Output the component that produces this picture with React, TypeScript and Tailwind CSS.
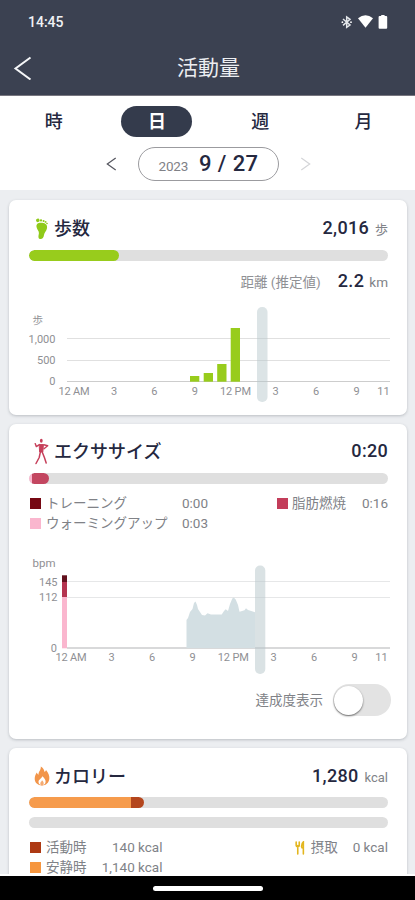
import type { ReactNode } from "react";

type Segment = { width: string; color: string };

function Progress({ segments, className = "" }: { segments: Segment[]; className?: string }) {
  return (
    <div className={`h-[11px] w-full overflow-hidden rounded-full bg-[#dfdfdf] ${className}`}>
      <div className="flex h-full w-fit overflow-hidden rounded-full">
        {segments.map((s) => (
          <div key={s.color} className={`h-full ${s.width} ${s.color}`} />
        ))}
      </div>
    </div>
  );
}

function Card({ className, children }: { className: string; children: ReactNode }) {
  return (
    <section
      className={`ml-[9px] w-[398px] shrink-0 rounded-[7px] bg-white pr-[19px] pl-5 shadow-[0_1px_3px_rgba(60,70,80,0.28)] ${className}`}
    >
      {children}
    </section>
  );
}

function CardHeader({ icon, title, value, unit }: { icon: ReactNode; title: string; value: string; unit?: string }) {
  return (
    <div className="flex h-7 items-center text-[#25283f]">
      <div className="flex h-7 w-[25px] shrink-0 items-center justify-center">{icon}</div>
      <h2 className="pt-[2px] text-[18px] leading-7 font-medium">{title}</h2>
      <div className="ml-auto flex items-baseline">
        <span className="text-[18px] leading-7 font-medium tracking-[0.3px]">{value}</span>
        {unit && <span className="ml-[6px] text-[13px] text-[#808287]">{unit}</span>}
      </div>
    </div>
  );
}

const hours = ["12 AM", "3", "6", "9", "12 PM", "3", "6", "9", "11"];

function HourLabels({ xs, y }: { xs: number[]; y: number }) {
  return (
    <g fill="#8f9094" textAnchor="middle" fontSize="11">
      {hours.map((h, i) => (
        <text key={i} x={xs[i]} y={y} textLength={h.length > 2 ? 31 : undefined}>
          {h}
        </text>
      ))}
    </g>
  );
}

function StepsChart() {
  return (
    <svg className="-ml-5 block h-[105px] w-[398px]" viewBox="9 304 398 105">
      <path d="M67 338.5H390M67 360.5H390" stroke="#e0e0e0" />
      <path d="M67 381.5H390" stroke="#cdcdcd" />
      <g fill="#8f9094" fontSize="11" textAnchor="end">
        <text x="43" y="324" fontSize="10.5">歩</text>
        <text x="55.5" y="342.5">1,000</text>
        <text x="55.5" y="364">500</text>
        <text x="55.5" y="385">0</text>
      </g>
      <g fill="#98cc1c">
        <rect x="190" y="376" width="9.3" height="5.7" />
        <rect x="203.7" y="373" width="9.3" height="8.7" />
        <rect x="217.2" y="364" width="9.3" height="17.7" />
        <rect x="230.7" y="328" width="9.3" height="53.7" />
      </g>
      <rect x="257" y="307" width="10.5" height="95" rx="5" fill="#b5c6ca" fillOpacity="0.48" />
      <HourLabels xs={[74, 114, 154.3, 194.8, 235.5, 275.7, 316, 356.5, 383.5]} y={394.5} />
    </svg>
  );
}

function HeartChart() {
  return (
    <svg className="-ml-5 block h-[120px] w-[398px]" viewBox="9 556 398 120">
      <path d="M67 581.5H390M67 597.5H390" stroke="#e6e7e8" />
      <path d="M67 648H390" stroke="#b2b3b5" />
      <g fill="#8f9094" fontSize="11" textAnchor="end">
        <text x="55.5" y="566.5" fontSize="11.5">bpm</text>
        <text x="57.5" y="585.5">145</text>
        <text x="57.5" y="601">112</text>
        <text x="57" y="651.5">0</text>
      </g>
      <rect x="62" y="575.3" width="5" height="7" fill="#62101d" />
      <rect x="62" y="582" width="5" height="15" fill="#b4334f" />
      <rect x="62" y="597" width="5" height="51.3" fill="#fab6ce" />
      <path
        d="M186.5 648V620L188 618L190 612L192.5 609L194 603L195.5 601.5L197 605L198 609L202 615L205 615.5L207.5 613.3L211 614.5H221.7L224 611L225.7 609.2L228 611L230 604L232.3 598.5L233.8 597.4L235.7 599.5L238 605L239.5 611.7L244.5 610.2L246 608.3L248 610L252 611.3L255 612.3V648Z"
        fill="#d3dfe3"
      />
      <rect x="255" y="565.5" width="10.3" height="108.5" rx="5" fill="#b5c6ca" fillOpacity="0.5" />
      <HourLabels xs={[71, 111.5, 152, 192.5, 233.3, 273.5, 314, 354.5, 381.5]} y={661} />
    </svg>
  );
}

function Swatch({ color }: { color: string }) {
  return <span className={`ml-px h-[11px] w-[11px] shrink-0 ${color}`} />;
}

function FootIcon() {
  return (
    <svg className="mt-[2px] -ml-[1px] h-[22px] w-[13px]" viewBox="0 0 13 24" preserveAspectRatio="none" fill="#8fca19">
      <path d="M1.6 10C0.8 6 3.6 4.8 7 5.2C11 5.6 12.6 8 12 11.3C11.4 14.5 9.4 16 9 18.5C8.6 21.5 7 23.5 5 22.9C2.6 22.2 3.6 19 3.9 16.5C4.2 14 2.2 13 1.6 10Z" />
      <ellipse cx="2.8" cy="2.6" rx="1.8" ry="1.9" transform="rotate(-15 2.8 2.6)" />
      <circle cx="6" cy="2.6" r="1.2" />
      <circle cx="8.6" cy="3.2" r="1.05" />
      <circle cx="10.6" cy="4.3" r="0.95" />
      <circle cx="12" cy="6" r="0.85" />
    </svg>
  );
}

function PersonIcon() {
  return (
    <svg className="-ml-[1px] h-[27px] w-[15px]" viewBox="0 0 15 27" fill="none" stroke="#c63f5a" strokeLinecap="round" strokeLinejoin="round">
      <ellipse cx="7.3" cy="2.7" rx="1.4" ry="2" fill="#c63f5a" stroke="none" />
      <path d="M5.6 6.6H9.4L8.8 14H6Z" fill="#c63f5a" strokeWidth="1" />
      <path d="M5.4 6.6L2.3 8.6L1.2 5.6M9.8 6.8L13.7 7.8L10 10.8" strokeWidth="1.4" />
      <path d="M6.3 14.4L5.2 19.5L2 25.5M8.4 14.4L10.4 19.5L12.2 25" strokeWidth="1.5" />
    </svg>
  );
}

function FlameIcon() {
  return (
    <svg className="h-[20px] w-[16px]" viewBox="0 0 16 20">
      <path
        d="M6.8 0.5C9.6 2.2 10.2 4.3 10.6 6C11.5 5.5 11.8 4.8 12 4C14.5 7 15.7 10 15.3 13C14.9 16.8 12 19.4 8 19.4C3.7 19.4 0.8 16.7 0.7 13C0.6 10 1.8 8 2.8 6.5C3.2 7.5 3.6 8.2 4.5 8.7C4.4 5.5 7.2 4 6.8 0.5Z"
        fill="#f2954a"
      />
      <path d="M8.2 10.2C10.4 12 11.7 13.6 11.6 15.7C11.5 17.8 10.1 19 8 19C5.9 19 4.5 17.8 4.5 15.7C4.5 13.6 7.4 12.8 8.2 10.2Z" fill="#fff" />
      <path d="M8 14.2C9.2 15.3 9.7 16 9.7 17.2C9.7 18.5 9 19.4 8 19.4C7 19.4 6.3 18.5 6.3 17.2C6.3 16 7.6 15.6 8 14.2Z" fill="#f5ab72" />
    </svg>
  );
}

function CutleryIcon() {
  return (
    <svg className="mt-px h-[14px] w-[10px]" viewBox="0 0 10 15" fill="none" stroke="#e3b61e" strokeLinecap="round" strokeWidth="1.7">
      <path d="M0.9 1V4.8Q0.9 6 2.6 6Q4.2 6 4.2 4.8V1M2.6 5V14M8.6 14V1Q6.6 2.5 6.7 6Q6.8 7.6 8.6 7.6" />
    </svg>
  );
}

function Chevron({ flip = false, className }: { flip?: boolean; className: string }) {
  return (
    <svg className={className} viewBox="0 0 11 15" fill="none" stroke="currentColor" strokeWidth="1.3">
      <path d={flip ? "M1 1L10 7.5L1 14" : "M10 1L1 7.5L10 14"} />
    </svg>
  );
}

function StatusIcons() {
  return (
    <svg className="h-4 w-[50px]" viewBox="340 13 50 16" fill="#fff">
      <path d="M343 18L350 24L346.7 26.3V16L350 18.4L343 24.4" fill="none" stroke="#e3e6ea" strokeWidth="1.5" />
      <circle cx="342.4" cy="21.2" r="0.9" />
      <circle cx="351" cy="21.2" r="0.9" />
      <path d="M358 17.3Q365.5 11.2 373 17.3L365.5 26.8Z" />
      <path d="M381.2 14H384.6V15H386.2Q387.2 15 387.2 16V26.7Q387.2 27.7 386.2 27.7H379.6Q378.6 27.7 378.6 26.7V16Q378.6 15 379.6 15H381.2Z" />
    </svg>
  );
}

export default function App() {
  return (
    <div className="flex h-[900px] w-[415px] flex-col overflow-hidden bg-[#eceef1] font-[Roboto,'Noto_Sans_CJK_JP',sans-serif] text-[#25283f]">
      <header className="h-24 shrink-0 border-b border-[#77767f] bg-[#3b4151] text-white">
        <div className="flex h-[43px] items-center justify-between pr-[25px] pl-7">
          <span className="pt-px text-[14px] font-medium text-[#f0f2f5]">14:45</span>
          <StatusIcons />
        </div>
        <div className="grid h-[50px] grid-cols-[60px_1fr_58px] items-center">
          <svg className="ml-[13px] h-6 w-5" viewBox="0 0 20 24" fill="none" stroke="#f5f6f8" strokeWidth="2">
            <path d="M17.5 1.5L2.5 12.5L17.5 23.5" />
          </svg>
          <h1 className="pt-px text-center text-[21px] leading-none text-[#eceef1]">活動量</h1>
        </div>
      </header>

      <div className="h-[94px] shrink-0 bg-white">
        <nav className="grid h-[50px] grid-cols-4 place-items-center pl-[2px] text-[18px] font-medium">
          <span>時</span>
          <span className="flex h-[31px] w-[71px] items-center justify-center rounded-full bg-[#343b4c] font-bold text-white">日</span>
          <span>週</span>
          <span>月</span>
        </nav>
        <div className="flex h-[35px] items-center justify-center pl-[2px]">
          <Chevron className="mr-[21px] h-[14px] w-[11px] text-[#55565f]" />
          <div className="flex h-[34px] w-[141px] items-baseline justify-center rounded-full border border-[#9b9b9f]">
            <span className="text-[13.5px] tracking-[-0.2px] text-[#808187]">2023</span>
            <span className="ml-[11px] text-[22px] leading-[32px] font-medium tracking-[0.4px]">9 / 27</span>
          </div>
          <Chevron flip className="ml-[21px] h-[14px] w-[11px] text-[#d4d5d8]" />
        </div>
      </div>

      <main className="flex h-[684px] shrink-0 flex-col gap-[9px] overflow-hidden pt-[10px]">
        <Card className="h-[215px] pt-[14px]">
          <CardHeader icon={<FootIcon />} title="歩数" value="2,016" unit="歩" />
          <Progress className="mt-2" segments={[{ width: "w-[90px]", color: "bg-[#98cc1c]" }]} />
          <div className="mt-[6px] flex h-7 items-baseline justify-end">
            <span className="text-[13.5px] text-[#8f9094]">距離 (推定値)</span>
            <span className="ml-[17px] text-[18px] leading-7 font-medium tracking-[0.4px]">2.2</span>
            <span className="ml-[5px] text-[13.5px] text-[#808287]">km</span>
          </div>
          <div className="mt-[9px]"><StepsChart /></div>
        </Card>

        <Card className="h-[315px] pt-[13px]">
          <CardHeader icon={<PersonIcon />} title="エクササイズ" value="0:20" />
          <Progress
            className="mt-2"
            segments={[
              { width: "w-[3px]", color: "bg-[#fab6ce]" },
              { width: "w-[17px]", color: "bg-[#c34660]" },
            ]}
          />
          <div className="mt-[9px] flex justify-between text-[13.5px] leading-5 text-[#808287]">
            <div className="grid grid-cols-[17px_136px_auto] items-center">
              <Swatch color="bg-[#760813]" />
              <span>トレーニング</span>
              <span>0:00</span>
              <Swatch color="bg-[#fab6ce]" />
              <span>ウォーミングアップ</span>
              <span>0:03</span>
            </div>
            <div className="flex h-5 items-center">
              <Swatch color="bg-[#c33d5a]" />
              <span className="ml-1">脂肪燃焼</span>
              <span className="ml-4">0:16</span>
            </div>
          </div>
          <div className="mt-[23px]"><HeartChart /></div>
          <div className="mt-[8px] -mr-[3px] flex h-8 items-center justify-end">
            <span className="pt-px text-[13.5px] text-[#808287]">達成度表示</span>
            <span className="ml-[10px] flex h-8 w-[58px] items-center rounded-full bg-[#e3e3e3] pl-px">
              <span className="h-[29px] w-[29px] rounded-full bg-white shadow-[0_1px_2px_rgba(0,0,0,0.55)]" />
            </span>
          </div>
        </Card>

        <Card className="h-[150px] pt-[14px]">
          <CardHeader icon={<FlameIcon />} title="カロリー" value="1,280" unit="kcal" />
          <Progress
            className="mt-[7px]"
            segments={[
              { width: "w-[102px]", color: "bg-[#f69b4c]" },
              { width: "w-[13px]", color: "bg-[#b4461d]" },
            ]}
          />
          <Progress className="mt-[9px]" segments={[]} />
          <div className="mt-[9px] flex justify-between text-[13.5px] leading-5 text-[#808287]">
            <div className="grid grid-cols-[17px_auto_76px] items-center">
              <Swatch color="bg-[#ad3913]" />
              <span>活動時</span>
              <span className="text-right">140 kcal</span>
              <Swatch color="bg-[#f6963f]" />
              <span>安静時</span>
              <span className="text-right">1,140 kcal</span>
            </div>
            <div className="flex h-5 items-center">
              <CutleryIcon />
              <span className="ml-[6px]">摂取</span>
              <span className="ml-[15px]">0 kcal</span>
            </div>
          </div>
        </Card>
      </main>

      <footer className="flex h-[26px] shrink-0 items-start justify-center border-t-2 border-white bg-black pt-[10px]">
        <div className="h-[5px] w-[110px] rounded-full bg-white" />
      </footer>
    </div>
  );
}
